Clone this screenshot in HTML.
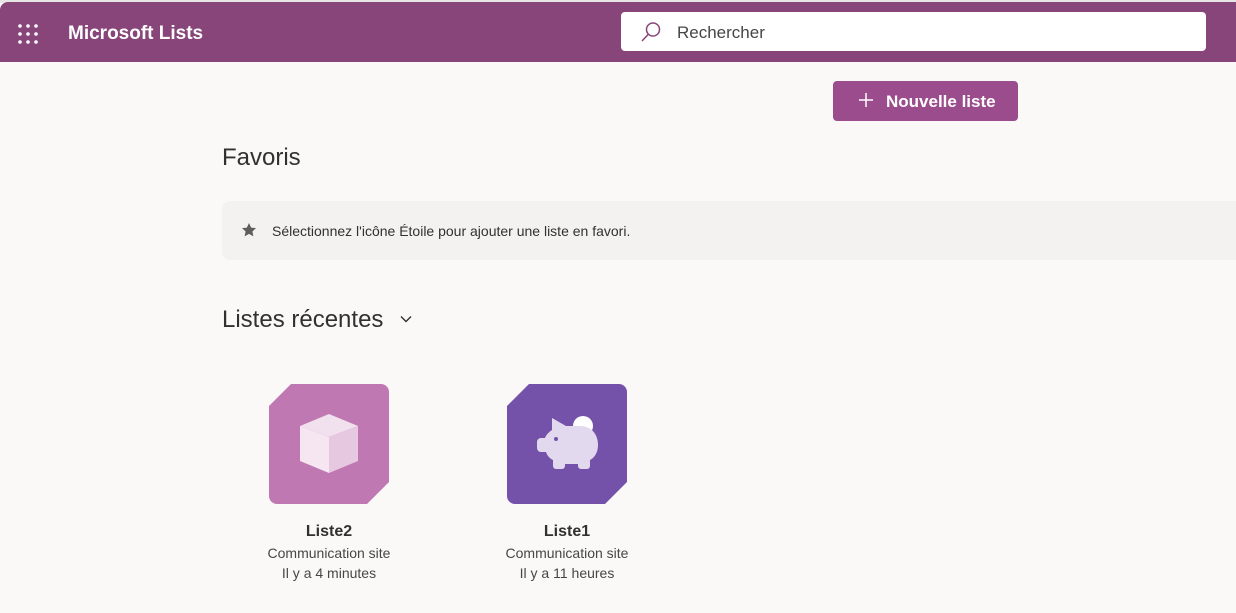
<!DOCTYPE html>
<html><head><meta charset="utf-8"><style>
*{margin:0;padding:0;box-sizing:border-box}
body{width:1236px;height:613px;background:#faf9f8;font-family:"Liberation Sans",sans-serif;position:relative;overflow:hidden;color:#323130}
.top{position:absolute;left:0;top:0;width:1236px;height:3px;background:#e8e6e4}
.hdr{position:absolute;left:0;top:2px;width:1236px;height:60px;background:#87457a;border-top-left-radius:8px}
.waffle{position:absolute;left:18px;top:22px}
.title{position:absolute;left:68px;top:21px;color:#fff;font-weight:bold;font-size:19px}
.search{position:absolute;left:621px;top:10px;width:585px;height:39px;background:#fff;border-radius:4px}
.search span{position:absolute;left:56px;top:11px;font-size:17px;color:#484644}
.btn{position:absolute;left:833px;top:81px;width:185px;height:40px;background:#9a4c8c;border-radius:4px;color:#fff;font-weight:bold;font-size:17px}
.btn span{position:absolute;left:53px;top:11px}
h2{position:absolute;left:222px;font-weight:normal;font-size:24px;color:#323130}
.banner{position:absolute;left:222px;top:201px;width:1030px;height:59px;background:#f3f2f1;border-radius:8px}
.banner span{position:absolute;left:50px;top:22px;font-size:14px}
.tile{position:absolute;top:384px;width:120px;height:120px;clip-path:polygon(22px 0,100% 0,100% 98px,98px 100%,0 100%,0 22px)}
.tile .in{width:100%;height:100%;border-radius:8px}
.lbl{position:absolute;width:200px;text-align:center;font-size:14px;color:#484644;line-height:20px}
.lbl b{display:block;font-size:16px;color:#323130;margin-bottom:1px}
</style></head><body>
<div class="top"></div>
<div class="hdr">
<svg class="waffle" width="20" height="20" viewBox="0 0 20 20" fill="#fff"><circle cx="2" cy="2" r="1.8"/><circle cx="10" cy="2" r="1.8"/><circle cx="18" cy="2" r="1.8"/><circle cx="2" cy="10" r="1.8"/><circle cx="10" cy="10" r="1.8"/><circle cx="18" cy="10" r="1.8"/><circle cx="2" cy="18" r="1.8"/><circle cx="10" cy="18" r="1.8"/><circle cx="18" cy="18" r="1.8"/></svg>
<div class="title">Microsoft Lists</div>
<div class="search">
<svg style="position:absolute;left:19px;top:9px" width="22" height="22" viewBox="0 0 22 22" fill="none" stroke="#87457a" stroke-width="1.5"><circle cx="13" cy="8.5" r="6.5"/><line x1="8.3" y1="13.2" x2="2" y2="20"/></svg>
<span>Rechercher</span></div>
</div>
<div class="btn"><svg style="position:absolute;left:25px;top:11px" width="16" height="16" viewBox="0 0 16 16" stroke="#fff" stroke-width="1.5"><line x1="8" y1="1" x2="8" y2="15"/><line x1="1" y1="8" x2="15" y2="8"/></svg><span>Nouvelle liste</span></div>
<h2 style="top:144px">Favoris</h2>
<div class="banner">
<svg style="position:absolute;left:19px;top:21px" width="16" height="16" viewBox="0 0 24 24" fill="#605e5c"><path d="M12 1.5l3.2 6.9 7.3.8-5.4 5 1.5 7.3L12 17.8l-6.6 3.7 1.5-7.3-5.4-5 7.3-.8z"/></svg>
<span>Sélectionnez l'icône Étoile pour ajouter une liste en favori.</span></div>
<h2 style="top:306px">Listes récentes</h2>
<svg style="position:absolute;left:399px;top:314px" width="14" height="10" viewBox="0 0 14 10" fill="none" stroke="#323130" stroke-width="1.4"><path d="M2 2.5l5 5 5-5"/></svg>
<div class="tile" style="left:269px"><div class="in" style="background:#bf78b2"></div>
<svg style="position:absolute;left:30px;top:30px" width="60" height="62" viewBox="0 0 60 62"><path d="M30 0L59 12 30 23 1 12z" fill="#f1e0ee"/><path d="M1 12L30 23 30 59 1 47z" fill="#f5e6f2"/><path d="M59 12L30 23 30 59 59 47z" fill="#e6c8e0"/></svg>
</div>
<div class="tile" style="left:507px"><div class="in" style="background:#7452aa"></div>
<svg style="position:absolute;left:28px;top:30px" width="64" height="58" viewBox="0 0 64 58"><circle cx="48" cy="12" r="10" fill="#fff"/><path d="M17 4l14 8h14c12 0 18 9 18 19 0 8-4 13-8 15v6a3 3 0 0 1-3 3h-6a3 3 0 0 1-3-3v-2H30v2a3 3 0 0 1-3 3h-6a3 3 0 0 1-3-3v-6c-4-2-6-5-7-8H6a4 4 0 0 1-4-4v-6a4 4 0 0 1 4-4h4c1-3 4-6 7-8z" fill="#e2d9ee"/><circle cx="21" cy="25" r="2" fill="#7452aa"/></svg>
</div>
<div class="lbl" style="left:229px;top:522px"><b>Liste2</b>Communication site<br>Il y a 4 minutes</div>
<div class="lbl" style="left:467px;top:522px"><b>Liste1</b>Communication site<br>Il y a 11 heures</div>
</body></html>
